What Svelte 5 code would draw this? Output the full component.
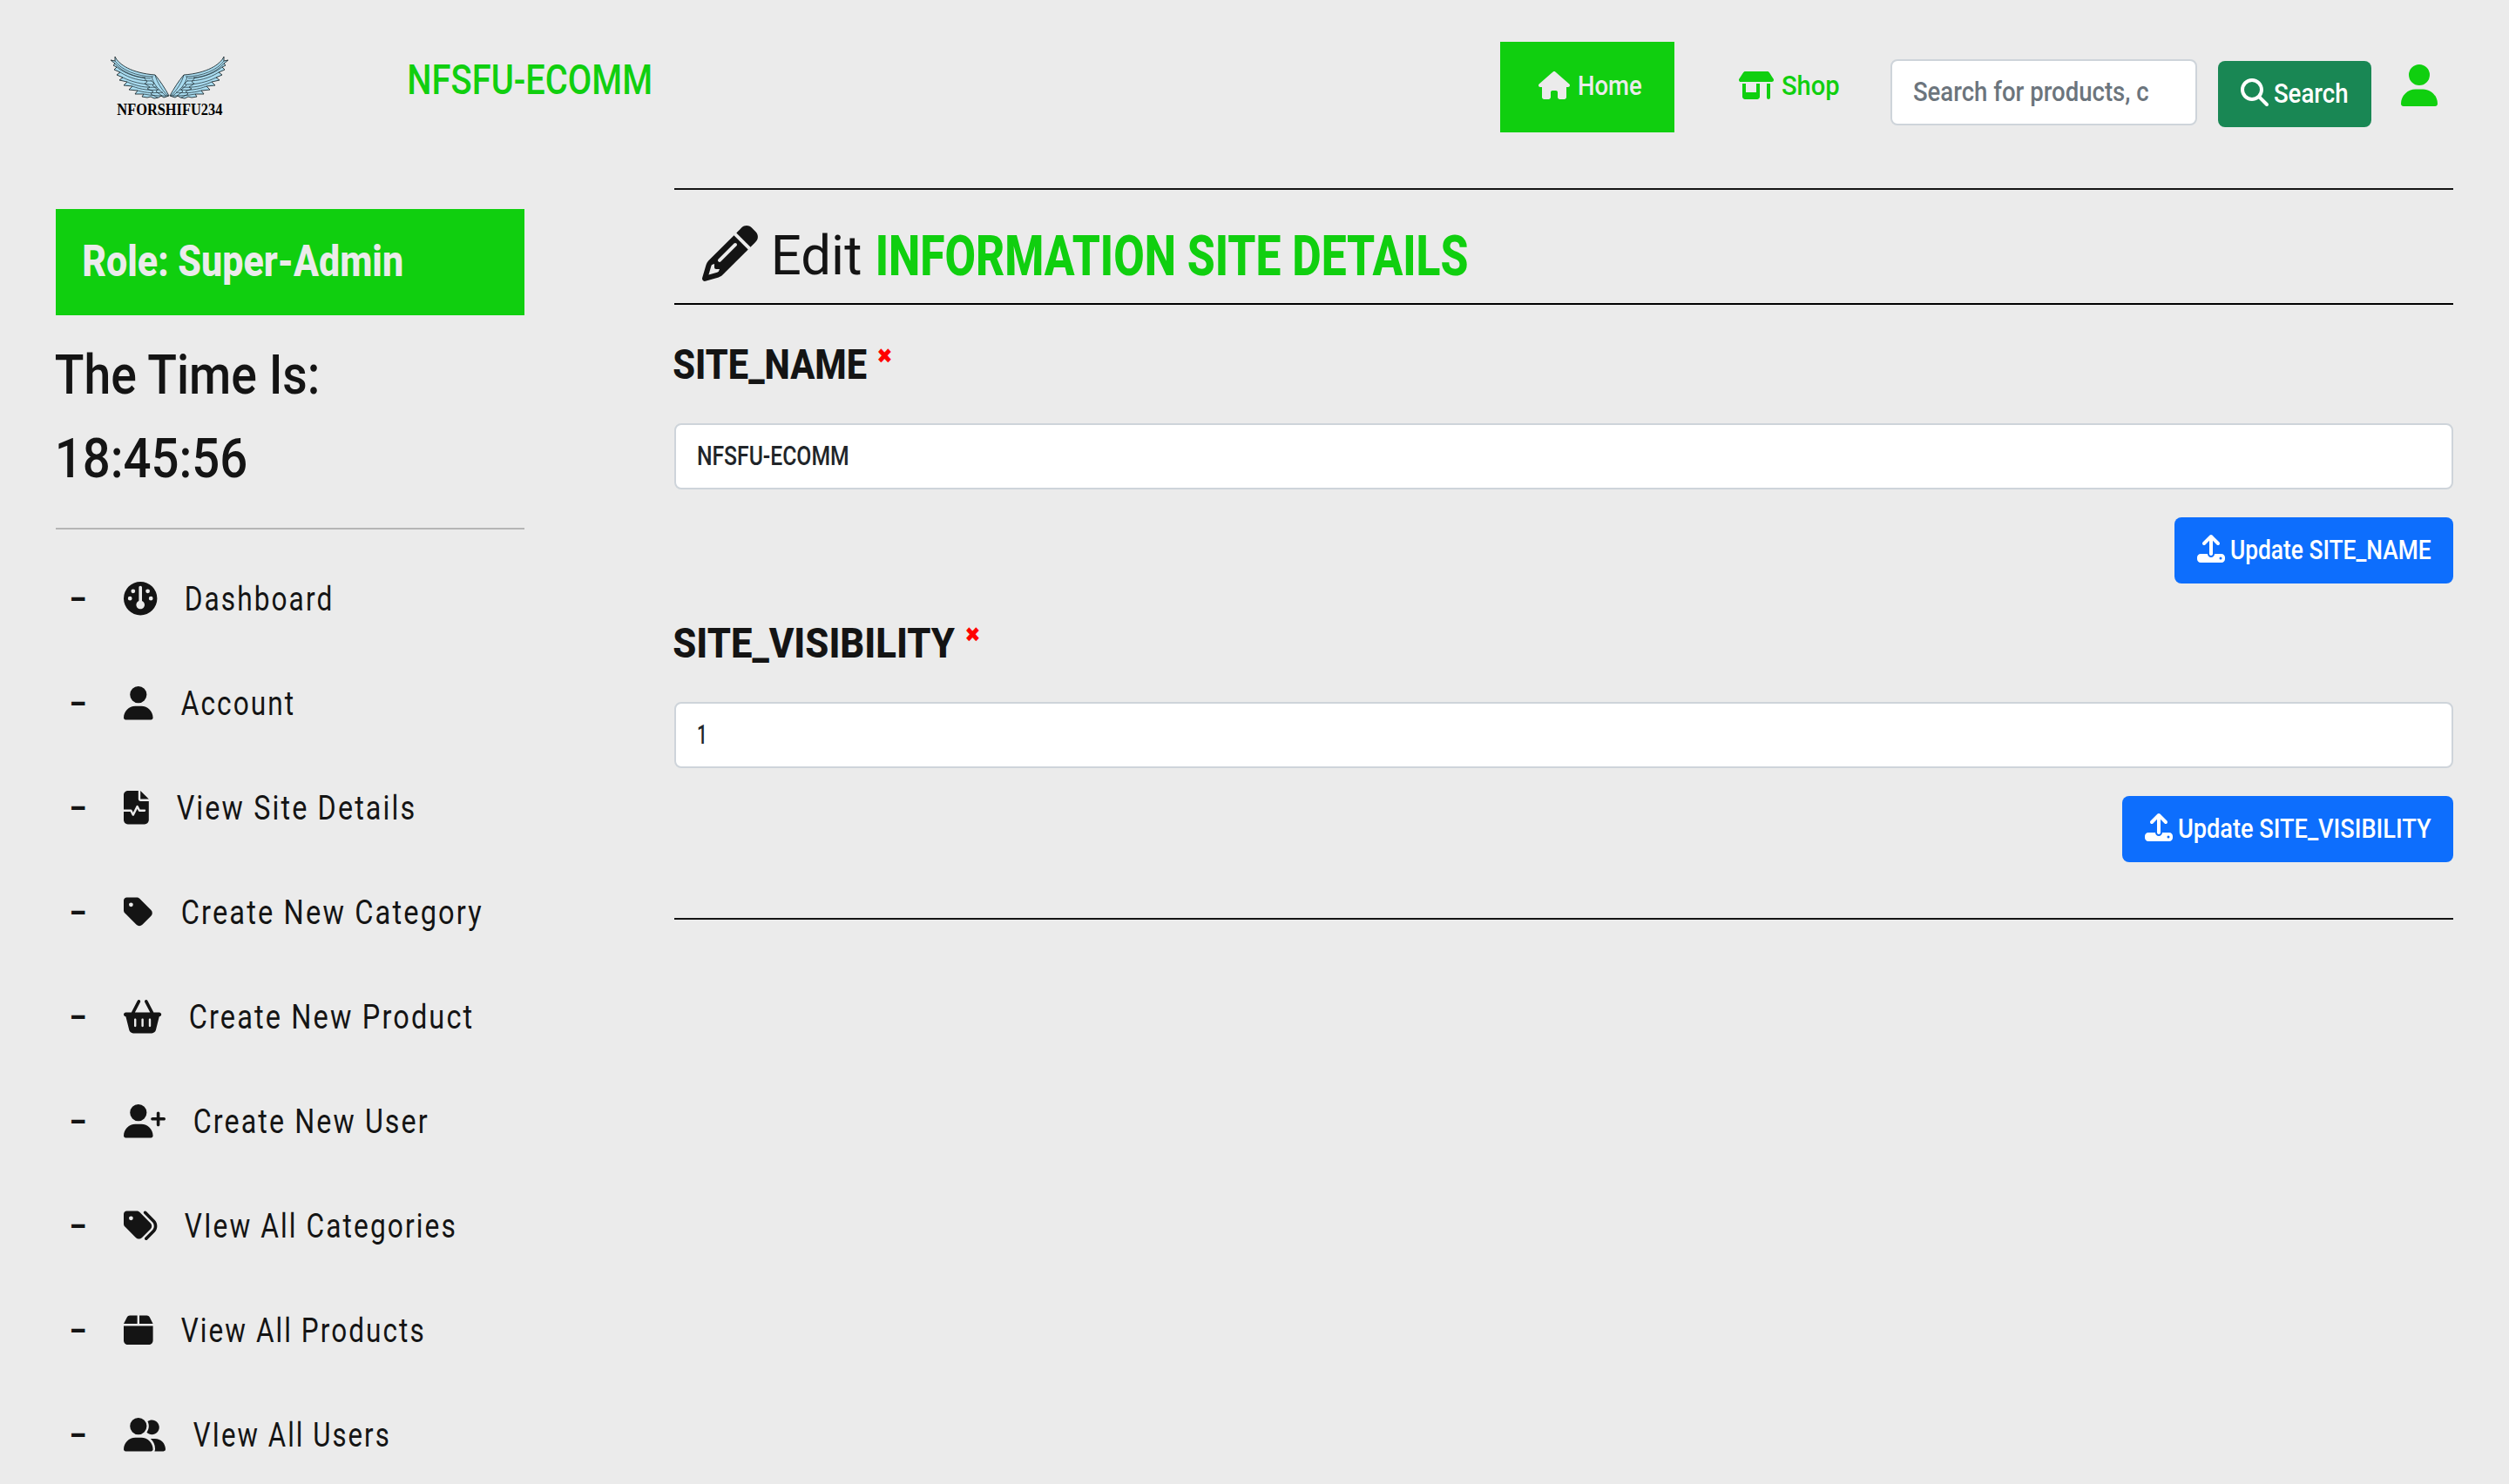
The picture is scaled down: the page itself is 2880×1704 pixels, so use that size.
<script>
  const icons = {
    house: { box: '0 0 576 512', d: 'M575.8 255.5c0 18-15 32.1-32 32.1h-32l.7 160.2c0 2.7-.2 5.4-.5 8.1V472c0 22.1-17.9 40-40 40H456c-1.1 0-2.2 0-3.3-.1c-1.4 .1-2.8 .1-4.2 .1H416 392c-22.1 0-40-17.9-40-40V448 384c0-17.7-14.3-32-32-32H256c-17.7 0-32 14.3-32 32v64 24c0 22.1-17.9 40-40 40H160 128.1c-1.5 0-3-.1-4.5-.2c-1.2 .1-2.4 .2-3.6 .2H104c-22.1 0-40-17.9-40-40V360c0-.9 0-1.9 .1-2.8V287.6H32c-18 0-32-14-32-32.1c0-9 3-17 10-24L266.4 8c7-7 15-8 22-8s15 2 21 7L564.8 231.5c8 7 12 15 11 24z' },
    shop: { box: '0 0 640 512', d: 'M36.8 192H603.2c20.3 0 36.8-16.5 36.8-36.8c0-7.3-2.2-14.4-6.2-20.4L558.2 21.4C549.3 8 534.4 0 518.3 0H121.7c-16 0-31 8-39.9 21.4L6.2 134.7c-4 6.1-6.2 13.2-6.2 20.4C0 175.5 16.5 192 36.8 192zM64 224V384v80c0 26.5 21.5 48 48 48H336c26.5 0 48-21.5 48-48V384 224H320V384H128V224H64zm448 0V480c0 17.7 14.3 32 32 32s32-14.3 32-32V224H512z' },
    search: { box: '0 0 512 512', d: 'M416 208c0 45.9-14.9 88.3-40 122.7L502.6 457.4c12.5 12.5 12.5 32.8 0 45.3s-32.8 12.5-45.3 0L330.7 376c-34.4 25.2-76.8 40-122.7 40C93.1 416 0 322.9 0 208S93.1 0 208 0S416 93.1 416 208zM208 352a144 144 0 1 0 0-288 144 144 0 1 0 0 288z' },
    user: { box: '0 0 448 512', d: 'M224 256A128 128 0 1 0 224 0a128 128 0 1 0 0 256zm-45.7 48C79.8 304 0 383.8 0 482.3C0 498.7 13.3 512 29.7 512H418.3c16.4 0 29.7-13.3 29.7-29.7C448 383.8 368.2 304 269.7 304H178.3z' },
    userPlus: { box: '0 0 640 512', d: 'M96 128a128 128 0 1 1 256 0A128 128 0 1 1 96 128zM0 482.3C0 383.8 79.8 304 178.3 304h91.4C368.2 304 448 383.8 448 482.3c0 16.4-13.3 29.7-29.7 29.7H29.7C13.3 512 0 498.7 0 482.3zM504 312V248H440c-13.3 0-24-10.7-24-24s10.7-24 24-24h64V136c0-13.3 10.7-24 24-24s24 10.7 24 24v64h64c13.3 0 24 10.7 24 24s-10.7 24-24 24H552v64c0 13.3-10.7 24-24 24s-24-10.7-24-24z' },
    userGroup: { box: '0 0 640 512', d: 'M96 128a128 128 0 1 1 256 0A128 128 0 1 1 96 128zM0 482.3C0 383.8 79.8 304 178.3 304h91.4C368.2 304 448 383.8 448 482.3c0 16.4-13.3 29.7-29.7 29.7H29.7C13.3 512 0 498.7 0 482.3zM609.3 512H471.4c5.4-9.4 8.6-20.3 8.6-32v-8c0-60.7-27.1-115.2-69.8-151.8c2.4-.1 4.7-.2 7.1-.2h61.4C567.8 320 640 392.2 640 481.3c0 17-13.8 30.7-30.7 30.7zM432 256c-31 0-59-12.6-79.3-32.9C372.4 196.5 384 163.6 384 128c0-26.8-6.6-52.1-18.3-74.3C384.3 40.1 407.2 32 432 32c61.9 0 112 50.1 112 112s-50.1 112-112 112z' },
    gauge: { box: '0 0 512 512', d: 'M0 256a256 256 0 1 1 512 0A256 256 0 1 1 0 256zm320 96c0-26.9-16.5-49.9-40-59.3V88c0-13.3-10.7-24-24-24s-24 10.7-24 24V292.7c-23.5 9.5-40 32.5-40 59.3c0 35.3 28.7 64 64 64s64-28.7 64-64zM144 176a32 32 0 1 0 0-64 32 32 0 1 0 0 64zm-16 80a32 32 0 1 0 -64 0 32 32 0 1 0 64 0zm288 32a32 32 0 1 0 0-64 32 32 0 1 0 0 64zM400 144a32 32 0 1 0 -64 0 32 32 0 1 0 64 0z' },
    file: { box: '32 0 384 512', d: 'M96 0C60.7 0 32 28.7 32 64V288H144c6.1 0 11.6 3.4 14.3 8.8L176 332.2l49.7-99.4c2.7-5.4 8.3-8.8 14.3-8.8s11.6 3.4 14.3 8.8L281.9 288H352c8.8 0 16 7.2 16 16s-7.2 16-16 16H272c-6.1 0-11.6-3.4-14.3-8.8L240 275.8l-49.7 99.4c-2.7 5.4-8.3 8.8-14.3 8.8s-11.6-3.4-14.3-8.8L134.1 320H32V448c0 35.3 28.7 64 64 64H352c35.3 0 64-28.7 64-64V160H288c-17.7 0-32-14.3-32-32V0H96zM288 0V128H416L288 0z' },
    tag: { box: '0 0 448 512', d: 'M0 80V229.5c0 17 6.7 33.3 18.7 45.3l176 176c25 25 65.5 25 90.5 0L418.7 317.3c25-25 25-65.5 0-90.5l-176-176c-12-12-28.3-18.7-45.3-18.7H48C21.5 32 0 53.5 0 80zm112 32a32 32 0 1 1 0 64 32 32 0 1 1 0-64z' },
    tags: { box: '0 0 512 512', d: 'M345 39.1L472.8 168.4c52.4 53 52.4 138.2 0 191.2L360.8 472.9c-9.3 9.4-24.5 9.5-33.9 .2s-9.5-24.5-.2-33.9L438.6 325.9c33.9-34.3 33.9-89.4 0-123.7L310.9 72.9c-9.3-9.4-9.2-24.6 .2-33.9s24.6-9.2 33.9 .2zM0 229.5V80C0 53.5 21.5 32 48 32H197.5c17 0 33.3 6.7 45.3 18.7l168 168c25 25 25 65.5 0 90.5L277.3 442.7c-25 25-65.5 25-90.5 0l-168-168C6.7 262.7 0 246.5 0 229.5zM144 144a32 32 0 1 0 -64 0 32 32 0 1 0 64 0z' },
    box: { box: '0 0 448 512', d: 'M50.7 58.5L0 160H208V32H93.7C75.5 32 58.9 42.3 50.7 58.5zM240 160H448L397.3 58.5C389.1 42.3 372.5 32 354.3 32H240V160zm208 32H0V416c0 35.3 28.7 64 64 64H384c35.3 0 64-28.7 64-64V192z' },
    basket: { box: '0 0 576 512', d: 'M253.3 35.1c6.1-11.8 1.5-26.3-10.2-32.4s-26.3-1.5-32.4 10.2L117.6 192H32c-17.7 0-32 14.3-32 32s14.3 32 32 32L83.9 463.5C91 492 116.6 512 146 512H430c29.4 0 55-20 62.1-48.5L544 256c17.7 0 32-14.3 32-32s-14.3-32-32-32H458.4L365.3 12.9C359.2 1.2 344.7-3.4 332.9 2.7s-16.3 20.6-10.2 32.4L404.3 192H171.7L253.3 35.1zM192 304v96c0 8.8-7.2 16-16 16s-16-7.2-16-16V304c0-8.8 7.2-16 16-16s16 7.2 16 16zm96-16c8.8 0 16 7.2 16 16v96c0 8.8-7.2 16-16 16s-16-7.2-16-16V304c0-8.8 7.2-16 16-16zm128 16v96c0 8.8-7.2 16-16 16s-16-7.2-16-16V304c0-8.8 7.2-16 16-16s16 7.2 16 16z' },
    pencil: { box: '0 0 512 512', d: 'M410.3 231l11.3-11.3-33.9-33.9-62.1-62.1L291.7 89.8l-11.3 11.3-22.6 22.6L58.6 322.9c-10.4 10.4-18 23.3-22.2 37.4L1 480.7c-2.5 8.4-.2 17.5 6.1 23.7s15.3 8.5 23.7 6.1l120.3-35.4c14.1-4.2 27-11.8 37.4-22.2L387.7 253.7 410.3 231zM160 399.4l-9.1 22.7c-4 3.1-8.5 5.4-13.3 6.9L59.4 452l23-78.1c1.4-4.9 3.8-9.4 6.9-13.3l22.7-9.1v32c0 8.8 7.2 16 16 16h32zM362.7 18.7L348.3 33.2 325.7 55.8 314.3 67.1l33.9 33.9 62.1 62.1 33.9 33.9 11.3-11.3 22.6-22.6 14.5-14.5c25-25 25-65.5 0-90.5L453.3 18.7c-25-25-65.5-25-90.5 0zm-47.4 168l-144 144c-6.2 6.2-16.4 6.2-22.6 0s-6.2-16.4 0-22.6l144-144c6.2-6.2 16.4-6.2 22.6 0s6.2 16.4 0 22.6z' },
    upload: { box: '0 0 512 512', d: 'M288 109.3V352c0 17.7-14.3 32-32 32s-32-14.3-32-32V109.3l-73.4 73.4c-12.5 12.5-32.8 12.5-45.3 0s-12.5-32.8 0-45.3l128-128c12.5-12.5 32.8-12.5 45.3 0l128 128c12.5 12.5 12.5 32.8 0 45.3s-32.8 12.5-45.3 0L288 109.3zM64 352H192c0 35.3 28.7 64 64 64s64-28.7 64-64H448c35.3 0 64 28.7 64 64v32c0 35.3-28.7 64-64 64H64c-35.3 0-64-28.7-64-64V416c0-35.3 28.7-64 64-64zM432 456a24 24 0 1 0 0-48 24 24 0 1 0 0 48z' }
  };

  const links = [
    { icon: 'gauge', text: 'Dashboard', width: 169.5 },
    { icon: 'user', text: 'Account', width: 129.5 },
    { icon: 'file', text: 'View Site Details', width: 273.5 },
    { icon: 'tag', text: 'Create New Category', width: 345 },
    { icon: 'basket', text: 'Create New Product', width: 325.5 },
    { icon: 'userPlus', text: 'Create New User', width: 269 },
    { icon: 'tags', text: 'VIew All Categories', width: 311 },
    { icon: 'box', text: 'View All Products', width: 279 },
    { icon: 'userGroup', text: 'VIew All Users', width: 225 }
  ];

  const fields = [
    { name: 'SITE_NAME', nameWidth: 220, value: 'NFSFU-ECOMM', valueWidth: 173, buttonWidth: 229 },
    { name: 'SITE_VISIBILITY', nameWidth: 321, value: '1', valueWidth: 10, buttonWidth: 289 }
  ];

  const capRatio = 0.711;
  const iconWidth = (name, height) => (Number(icons[name].box.split(' ')[2]) / 512) * height;
</script>

{#snippet icon(name, height)}
  <svg class="icon" viewBox={icons[name].box} width={iconWidth(name, height)} {height} aria-hidden="true">
    <path d={icons[name].d} />
  </svg>
{/snippet}

<!-- Condensed lettering: the box is as wide as the word and as tall as its capitals. -->
{#snippet label(text, width, cap)}
  <svg class="label" {width} height={cap}>
    <text x={-cap * 0.05} y={cap} font-size={cap / capRatio} textLength={width + cap * 0.08} lengthAdjust="spacingAndGlyphs">{text}</text>
  </svg>
{/snippet}

{#snippet wing()}
  <path class="feather" d="M5 0 C9 9 24 19 51 21 C57 28 62 36 67 45 L61 47 L58 45 L55 47 L50 48 L46 46 L42 47 L36 46 L38 43 L28 43 L31 39 L21 38 L25 34 L15 33 L19 29 L10 27 L14 24 L7 21 L11 18 L4 15 L7 12 L3 10 L5 8 L0 4 L5 5 Z" />
  <path class="vane" d="M5 5 C12 15 30 23 49 23 M7 12 C17 20 32 25 46 25 M11 18 C22 25 34 28 47 28 M14 24 C24 29 36 32 49 32 M19 29 C30 34 40 36 53 35 M25 34 C35 38 45 39 56 38 M31 39 C42 42 50 42 60 41 M38 43 C48 45 55 45 66 45" />
  <path class="vane" d="M5 8 C14 18 29 24 40 24 M51 21 C53 29 59 39 66 45 M47 23 C49 31 55 39 64 45 M38 24 L42 29 L39 31 L45 35 L42 37 L49 40 L46 43 L54 47 M46 27 L50 31 L48 33 L54 38 L52 40 L59 45" />
{/snippet}

<div class="page">
  <header>
    <div class="logo">
      <svg width="136" height="50" viewBox="0 0 136 50" aria-hidden="true">
        <g>{@render wing()}</g>
        <g transform="translate(135 0) scale(-1 1)">{@render wing()}</g>
      </svg>
      <div class="logo-name">{@render label('NFORSHIFU234', 120, 13)}</div>
    </div>
    <div class="brand">{@render label('NFSFU-ECOMM', 279, 34)}</div>
    <nav class="top-nav">
      <div class="home">
        {@render icon('house', 32)}
        {@render label('Home', 72, 22.5)}
      </div>
      <div class="shop">
        {@render icon('shop', 32)}
        {@render label('Shop', 65, 22.5)}
      </div>
    </nav>
    <div class="search-box">{@render label('Search for products, c', 269, 22.5)}</div>
    <div class="search-button">
      {@render icon('search', 32)}
      {@render label('Search', 84, 22.5)}
    </div>
    <div class="profile">{@render icon('user', 48)}</div>
  </header>

  <div class="columns">
    <aside>
      <div class="role">{@render label('Role: Super-Admin', 366, 35.7)}</div>
      <div class="clock">
        {@render label('The Time Is:', 301, 45)}
        {@render label('18:45:56', 218, 45)}
      </div>
      <ul>
        {#each links as link}
          <li>
            <span class="dash">{@render label('–', 17, 27)}</span>
            {@render icon(link.icon, 38.4)}
            {@render label(link.text, link.width, 27)}
          </li>
        {/each}
      </ul>
    </aside>

    <main>
      <div class="title">
        {@render icon('pencil', 64)}
        {@render label('Edit', 101, 45)}
        <strong>{@render label('INFORMATION SITE DETAILS', 677, 46)}</strong>
      </div>
      {#each fields as field}
        <section>
          <div class="name">
            {@render label(field.name, field.nameWidth, 34.7)}
            <span class="required">{@render label('✖', 17, 17)}</span>
          </div>
          <div class="value">{@render label(field.value, field.valueWidth, 22.5)}</div>
          <div class="update">
            {@render icon('upload', 32)}
            {@render label(`Update ${field.name}`, field.buttonWidth, 22.5)}
          </div>
        </section>
      {/each}
    </main>
  </div>
</div>

<style>
  :global(body) {
    margin: 0;
    background: #ebebeb;
  }
  .page {
    box-sizing: border-box;
    width: 2880px;
    height: 1704px;
    overflow: hidden;
    background: #ebebeb;
    color: #141414;
    font-family: Roboto, 'Liberation Sans', sans-serif;
  }
  .icon,
  .label {
    display: block;
    flex: none;
    fill: currentColor;
    overflow: visible;
  }
  header {
    display: flex;
    align-items: flex-start;
    box-sizing: border-box;
    height: 216px;
    padding: 48px 82px 0 127px;
    font-weight: 500;
  }
  .logo {
    width: 342px;
    padding-top: 17px;
  }
  .logo > svg {
    display: block;
  }
  .feather {
    fill: #a9dcf0;
    stroke: #1d2b30;
    stroke-width: 0.9;
  }
  .vane {
    fill: none;
    stroke: #1d2b30;
    stroke-width: 0.7;
  }
  .logo-name {
    padding: 4px 0 0 8px;
    color: #000;
    font-family: 'Liberation Serif', serif;
    font-weight: 700;
  }
  .brand {
    padding-top: 26px;
    color: #10cf0f;
  }
  .top-nav {
    display: flex;
    margin-left: auto;
    color: #10cf0f;
  }
  .home,
  .shop {
    display: flex;
    align-items: center;
    gap: 10px;
    box-sizing: border-box;
    height: 104px;
    padding-bottom: 4px;
  }
  .home {
    width: 200px;
    padding-left: 44px;
    background: #10cf0f;
    color: #ebebeb;
  }
  .shop {
    width: 248px;
    padding-left: 74px;
  }
  .home .label,
  .shop .label {
    margin-top: -1px;
  }
  .search-box,
  .value {
    display: flex;
    align-items: center;
    box-sizing: border-box;
    height: 76px;
    padding: 0 0 3px 25px;
    border: 2px solid #ced4da;
    border-radius: 8px;
    background: #fff;
    color: #212529;
    font-weight: 500;
  }
  .search-box {
    width: 352px;
    margin: 20px 24px 0 0;
    color: #6c757d;
  }
  .search-button,
  .update {
    display: flex;
    align-items: center;
    gap: 7px;
    box-sizing: border-box;
    height: 76px;
    padding: 0 26px 4px;
    border-radius: 8px;
    color: #fff;
    font-weight: 500;
  }
  .search-button {
    width: 176px;
    margin: 22px 34px 0 0;
    background: #198754;
  }
  .search-button .label,
  .update .label {
    margin-top: 1px;
  }
  .profile {
    padding-top: 26px;
    color: #10cf0f;
  }
  .columns {
    display: grid;
    grid-template-columns: 538px 2042px;
    column-gap: 172px;
    padding-left: 64px;
  }
  aside {
    padding-top: 24px;
  }
  .role {
    display: flex;
    align-items: center;
    box-sizing: border-box;
    height: 122px;
    padding: 0 0 4px 32px;
    background: #10cf0f;
    color: #ebebeb;
    font-weight: 800;
  }
  .clock {
    display: flex;
    flex-direction: column;
    gap: 51px;
    padding: 45px 0 58px 1px;
    border-bottom: 2px solid #b5b5b5;
    font-weight: 500;
  }
  ul {
    margin: 0;
    padding: 19px 0 0 17px;
    list-style: none;
    letter-spacing: 2.5px;
  }
  li {
    display: flex;
    align-items: center;
    height: 120px;
  }
  .dash {
    width: 61px;
    font-weight: 700;
    letter-spacing: 0;
  }
  li > .icon {
    margin-right: 33px;
  }
  .title {
    display: flex;
    align-items: center;
    box-sizing: border-box;
    height: 134px;
    padding: 16px 0 0 32px;
    border-top: 2px solid #141414;
    border-bottom: 2px solid #000;
  }
  .title .label {
    margin: 3px 0 0 17px;
  }
  .title strong {
    color: #10cf0f;
    font-weight: 800;
  }
  .title strong .label {
    margin-left: 19px;
  }
  main {
    height: 838px;
    border-bottom: 2px solid #141414;
  }
  section {
    display: flex;
    flex-direction: column;
    height: 320px;
    box-sizing: border-box;
    padding-top: 50px;
  }
  .name {
    display: flex;
    height: 86px;
    font-weight: 800;
  }
  .required {
    margin-left: 13px;
    color: #f00;
    font-family: 'DejaVu Sans', sans-serif;
  }
  .update {
    align-self: flex-end;
    margin-top: 32px;
    background: #0d6efd;
  }
</style>
